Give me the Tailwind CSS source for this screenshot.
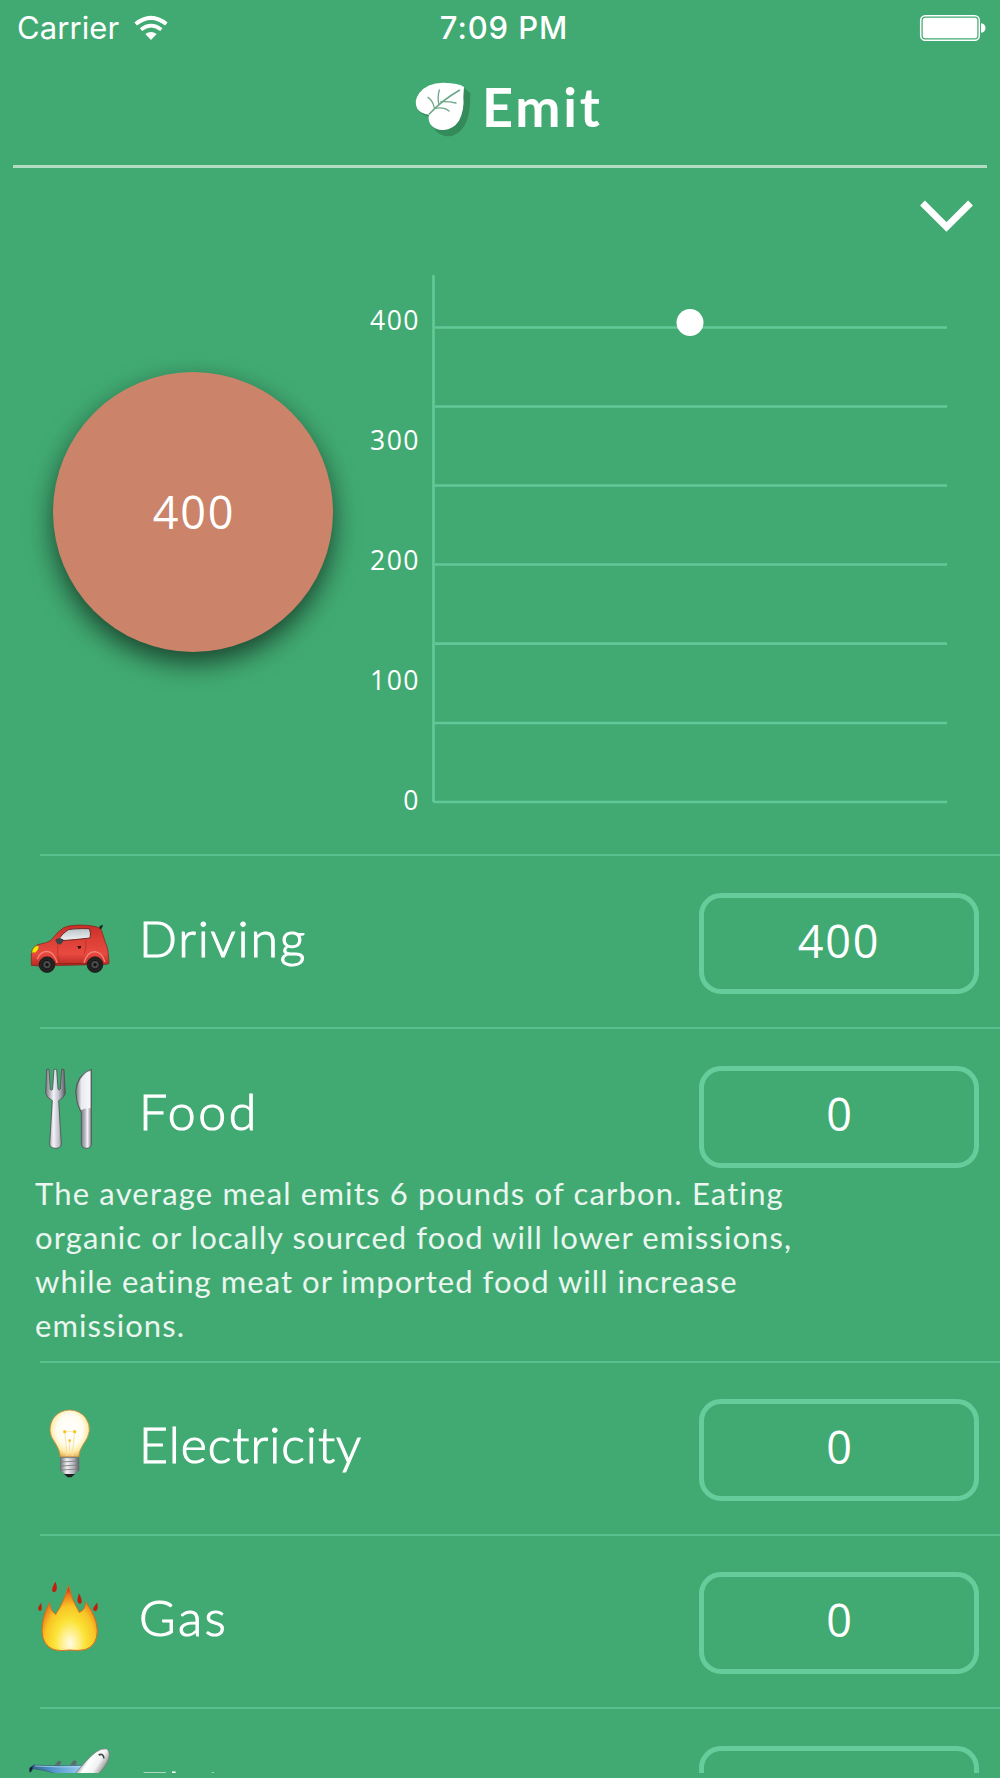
<!DOCTYPE html>
<html lang="en">
<head>
<meta charset="utf-8">
<title>Emit</title>
<script src="https://cdn.jsdelivr.net/npm/@tailwindcss/browser@4"></script>
</head>
<body class="bg-[#41aa72] text-white">
<div class="flex h-[1778px] w-[1000px] flex-col overflow-hidden pb-[5px]">

  <!-- Status bar -->
  <div class="grid h-[54px] shrink-0 grid-cols-3 items-center pt-[1px] pr-[13px] pl-[17px] font-['Inter',sans-serif] text-[31px] leading-[54px]">
    <div class="flex items-center gap-[15px]">
      <span class="tracking-[0.1px]">Carrier</span>
      <svg class="h-[26px] w-[34px]" viewBox="399 41 102 78" fill="none" stroke="#fff">
        <path d="M404 68Q450 31 496 68" stroke-width="12"/>
        <path d="M420 85Q450 61 481 85" stroke-width="11"/>
        <path d="M433 98Q450 86 467 98L450 116Z" fill="#fff" stroke="none"/>
      </svg>
    </div>
    <div class="pl-[4px] text-center font-medium tracking-[0.9px]">7:09 PM</div>
    <div class="flex justify-end">
      <svg class="h-[28px] w-[68px]" viewBox="0 0 68 28">
        <rect x="1.7" y="1.7" width="58.6" height="24.6" rx="4.5" fill="none" stroke="#fff" stroke-width="1.5"/>
        <rect x="3.7" y="3.7" width="54.6" height="20.6" rx="2.5" fill="#fff"/>
        <path d="M62 9.3Q66.5 10 66.5 14T62 18.7Z" fill="#fff"/>
      </svg>
    </div>
  </div>

  <!-- Title -->
  <header class="mx-[13px] flex h-[114px] shrink-0 items-start border-b-[3px] border-[#b3ddc3] pt-[20px] pl-[394px]">
    <svg class="mt-[2px] h-[70px] w-[70px] shrink-0" viewBox="21 228 210 210">
      <path d="M192 264L211 280Q212 345 195 374Q172 414 135 408Q112 402 101 383L85 348Q62 345 54 329Z" fill="#338a5b"/>
      <path d="M192 261Q178 249 130 248Q80 249 58 279Q40 303 52 326Q62 341 87 344Q83 362 93 375Q107 391 131 390Q160 388 177 362Q194 330 190 290Z" fill="#fff"/>
      <g fill="none" stroke="#6fa889" stroke-linecap="round">
        <path d="M88 342Q125 302 178 271" stroke-width="5"/>
        <path d="M103 324Q99 302 84 292M116 311Q112 292 118 270M105 325Q132 320 147 333M123 305Q145 304 168 309" stroke-width="4"/>
      </g>
    </svg>
    <h1 class="pl-[5px] font-['Lato',sans-serif] text-[54px] leading-[66px] font-bold tracking-[2.8px]">Emit</h1>
  </header>

  <!-- Summary: total and chart -->
  <section class="flex h-[686px] shrink-0 flex-col">
    <div class="flex h-[82px] justify-end pt-[28px] pr-[24px]">
      <svg class="h-[40px] w-[60px]" viewBox="916 196 60 40" fill="none" stroke="#fff" stroke-width="6.8">
        <path d="M922.5 203L946.5 227L970.5 203"/>
      </svg>
    </div>
    <div class="flex">
      <div class="ml-[53px] flex pt-[122px]">
        <div class="flex size-[280px] items-center justify-center rounded-full bg-[#cb8469] pl-[2px] font-['Open_Sans',sans-serif] text-[45px] tracking-[1.8px] shadow-[0_11px_27px_rgba(0,0,0,0.6)]">400</div>
      </div>
      <div class="mt-[50px] flex h-[520px] w-[87px] flex-col justify-between text-right font-['Open_Sans',sans-serif] text-[26.5px] leading-[40px] tracking-[1.5px]">
        <span>400</span><span>300</span><span>200</span><span>100</span><span>0</span>
      </div>
      <svg class="mt-[20px] ml-[10px] h-[540px] w-[520px]" viewBox="430 270 520 540" fill="none" stroke="#63c897" stroke-width="2.7">
        <path d="M433.5 275V802"/>
        <path d="M435 327.5H947M435 406.5H947M435 485.5H947M435 564.5H947M435 643.7H947M435 723H947M433.5 802H947"/>
        <circle cx="690" cy="322.5" r="13.5" fill="#fff" stroke="none"/>
      </svg>
    </div>
  </section>

  <!-- Categories -->
  <main class="min-h-0 grow overflow-hidden font-['Lato',sans-serif]">
    <section class="h-[173px]">
      <div class="ml-[40px] h-[2px] bg-[#5bc08f]"></div>
      <div class="-mt-[2px] flex">
        <svg class="h-[173px] w-[139px] shrink-0" viewBox="0 42 417 519">
          <defs>
            <linearGradient id="car" x1="0" y1="0" x2="0" y2="1"><stop offset="0" stop-color="#c62f27"/><stop offset=".3" stop-color="#d93d34"/><stop offset=".7" stop-color="#e84a40"/><stop offset="1" stop-color="#b92820"/></linearGradient>
            <linearGradient id="glass" x1="0" y1="0" x2="0" y2="1"><stop offset="0" stop-color="#b9c2c6"/><stop offset="1" stop-color="#f3f5f6"/></linearGradient>
          </defs>
          <path d="M297 268L299 258L309 254L306 264L302 270Z" fill="#222"/>
          <path d="M94 376V342Q96 322 113 314Q142 309 153 301Q172 275 191 263Q205 256 236 255Q280 255 298 264Q306 269 309 285L316 307Q325 322 327 370L320 373L115 378Z" fill="url(#car)" stroke="#7c2018" stroke-width="2"/>
          <path d="M112 358Q120 334 142 334Q163 336 172 370M252 369Q260 336 285 335Q306 337 315 366" fill="none" stroke="#f4857a" stroke-width="4"/>
          <path d="M160 371H262" stroke="#98221b" stroke-width="4"/>
          <path d="M172 303Q188 278 205 269Q225 265 268 266Q274 278 270 294Q230 299 172 303Z" fill="url(#glass)" stroke="#6e2622" stroke-width="3"/>
          <path d="M173 300V340Q175 358 180 368M257 300Q260 320 253 342" fill="none" stroke="#b32c25" stroke-width="2"/>
          <path d="M166 300Q170 293 181 295L190 298Q190 310 179 314Q169 312 166 300Z" fill="#3b4447"/>
          <path d="M232 318H243V324L236 327Z" fill="#3a100e"/>
          <path d="M95 338Q98 322 110 317L117 319Q116 331 106 338Z" fill="#f4e80a" stroke="#9c7d10" stroke-width="1.5"/>
          <g fill="#242424" stroke="#111" stroke-width="2"><circle cx="141" cy="374" r="23.5"/><circle cx="285" cy="374" r="23.5"/></g>
          <g fill="#4a4a4a" stroke="#101010" stroke-width="3"><circle cx="141" cy="374" r="13"/><circle cx="285" cy="374" r="13"/></g>
          <g fill="#141414"><circle cx="141" cy="374" r="5"/><circle cx="285" cy="374" r="5"/></g>
        </svg>
        <div class="w-[560px] pt-[54px] text-[50px] leading-[60px] font-light tracking-[1.8px] [-webkit-text-stroke:1.1px_white]">Driving</div>
        <div class="mt-[39px] flex h-[101px] w-[280px] items-center justify-center rounded-[22px] border-[5px] border-[#66cc9c] pb-[5px] font-['Open_Sans',sans-serif] text-[45px] tracking-[1.8px]">400</div>
      </div>
    </section>

    <section class="h-[334px]">
      <div class="ml-[40px] h-[2px] bg-[#5bc08f]"></div>
      <div class="-mt-[2px] flex h-[144px]">
        <svg class="h-[173px] w-[139px] shrink-0" viewBox="0 -39 417 519">
          <defs>
            <linearGradient id="steel"><stop offset="0" stop-color="#777780"/><stop offset=".4" stop-color="#f1f1f6"/><stop offset=".65" stop-color="#c5c5d0"/><stop offset="1" stop-color="#55555d"/></linearGradient>
            <linearGradient id="handle" gradientUnits="userSpaceOnUse" x1="243" x2="276" y1="0" y2="0"><stop offset="0" stop-color="#777780"/><stop offset=".35" stop-color="#b5b5c0"/><stop offset=".6" stop-color="#f4f4f8"/><stop offset="1" stop-color="#6c6c75"/></linearGradient>
            <linearGradient id="blade"><stop offset="0" stop-color="#85868c"/><stop offset=".35" stop-color="#e9ebee"/><stop offset="1" stop-color="#f8f8fa"/></linearGradient>
          </defs>
          <g stroke="#4c5054" stroke-width="2.5" stroke-linejoin="round">
            <path d="M140 88H147L151 148Q155 154 158 147L162 88H170L174 147Q177 154 181 147L185 88H192L196 160Q194 172 176 182L184 312Q183 325 166 325Q150 324 149 312L157 182Q139 172 137 160Z" fill="url(#steel)"/>
            <path d="M274 88V312Q273 325 259 325Q245 324 244 312V219Q228 190 227 155Q230 103 274 88Z" fill="url(#handle)"/>
          </g>
          <path d="M271 93V205Q254 203 243 211Q230 185 230 155Q234 108 271 93Z" fill="url(#blade)"/>
        </svg>
        <div class="w-[560px] pt-[54px] text-[50px] leading-[60px] font-light tracking-[2.6px] [-webkit-text-stroke:1.1px_white]">Food</div>
        <div class="mt-[39px] flex h-[102px] w-[280px] items-center justify-center rounded-[22px] border-[5px] border-[#66cc9c] pb-[6px] font-['Open_Sans',sans-serif] text-[45px]">0</div>
      </div>
      <p class="pl-[35px] text-[31px] leading-[44px] whitespace-nowrap text-[#eaf6ef]"><span class="tracking-[1.18px]">The average meal emits 6 pounds of carbon. Eating</span><br><span class="tracking-[1.1px]">organic or locally sourced food will lower emissions,</span><br><span class="tracking-[1.04px]">while eating meat or imported food will increase</span><br><span class="tracking-[1.1px]">emissions.</span></p>
    </section>

    <section class="h-[173px]">
      <div class="ml-[40px] h-[2px] bg-[#5bc08f]"></div>
      <div class="-mt-[2px] flex">
        <svg class="h-[173px] w-[139px] shrink-0" viewBox="0 33 417 519">
          <defs>
            <radialGradient id="bulb" cx=".5" cy=".42" r=".6"><stop offset="0" stop-color="#fff"/><stop offset=".55" stop-color="#fffdf0"/><stop offset=".8" stop-color="#ffeaa4"/><stop offset="1" stop-color="#e9ae50"/></radialGradient>
            <linearGradient id="cap"><stop offset="0" stop-color="#6f7478"/><stop offset=".35" stop-color="#f0f0f2"/><stop offset=".7" stop-color="#b5b5be"/><stop offset="1" stop-color="#5c6064"/></linearGradient>
          </defs>
          <path d="M209 180Q240 181 257 204Q270 222 268 243Q266 261 250 283Q238 300 236 321H181Q179 299 167 281Q151 260 150 242Q150 217 164 200Q181 181 209 180Z" fill="url(#bulb)" stroke="#c98b3c" stroke-width="2.5"/>
          <path d="M194 247L202 318M224 247L216 318M209 272V310" fill="none" stroke="#f6e2ae" stroke-width="3"/>
          <path d="M192 245H226" stroke="#fbe9a4" stroke-width="3"/>
          <g fill="#f6c521"><circle cx="194" cy="245" r="5"/><circle cx="224" cy="245" r="5"/><circle cx="209" cy="272" r="4"/></g>
          <path d="M181 322H237V361L221 374H196L181 361Z" fill="url(#cap)" stroke="#666b6e" stroke-width="1.5"/>
          <path d="M181 323H237M182 336L236 333M182 348L236 345M183 360L235 357" stroke="#777b80" stroke-width="2.5"/>
          <path d="M192 372H225L214 382H203Z" fill="#202123"/>
        </svg>
        <div class="w-[560px] pt-[53px] text-[50px] leading-[60px] font-light tracking-[1px] [-webkit-text-stroke:1.1px_white]">Electricity</div>
        <div class="mt-[38px] flex h-[102px] w-[280px] items-center justify-center rounded-[22px] border-[5px] border-[#66cc9c] pb-[6px] font-['Open_Sans',sans-serif] text-[45px]">0</div>
      </div>
    </section>

    <section class="h-[173px]">
      <div class="ml-[40px] h-[2px] bg-[#5bc08f]"></div>
      <div class="-mt-[2px] flex">
        <svg class="h-[173px] w-[139px] shrink-0" viewBox="0 -18 417 519">
          <defs>
            <radialGradient id="fire" gradientUnits="userSpaceOnUse" cx="210" cy="310" r="165" gradientTransform="translate(210 0) scale(.68 1) translate(-210 0)"><stop offset="0" stop-color="#fffbe8"/><stop offset=".22" stop-color="#fff08a"/><stop offset=".42" stop-color="#fbe336"/><stop offset=".68" stop-color="#f8c424"/><stop offset=".88" stop-color="#ea7a1c"/><stop offset="1" stop-color="#cf2a12"/></radialGradient>
          </defs>
          <path d="M206 137Q213 177 238 217Q256 211 257 186Q291 232 292 272Q291 318 255 329Q232 333 209 330Q184 334 162 329Q127 317 126 272Q126 231 149 188Q150 211 167 223Q190 190 206 137Z" fill="url(#fire)" stroke="#dd6b1b" stroke-width="3"/>
          <g fill="#d01808" stroke="#9c2b18" stroke-width="1">
            <path d="M166 126Q173 144 168 152Q163 159 157 153Q155 146 166 126Z"/>
            <path d="M237 161Q247 180 244 188Q239 194 234 187Q231 178 237 161Z"/>
            <path d="M123 190Q126 206 123 211Q118 214 115 208Q114 202 123 190Z"/>
            <path d="M291 189Q295 202 290 211Q284 216 280 209Q280 202 291 189Z"/>
          </g>
        </svg>
        <div class="w-[560px] pt-[53px] text-[50px] leading-[60px] font-light tracking-[2.4px] [-webkit-text-stroke:1.1px_white]">Gas</div>
        <div class="mt-[38px] flex h-[102px] w-[280px] items-center justify-center rounded-[22px] border-[5px] border-[#66cc9c] pb-[6px] font-['Open_Sans',sans-serif] text-[45px]">0</div>
      </div>
    </section>

    <section class="h-[173px]">
      <div class="ml-[40px] h-[2px] bg-[#5bc08f]"></div>
      <div class="-mt-[2px] flex">
        <svg class="h-[173px] w-[139px] shrink-0" viewBox="0 501 417 519">
          <defs>
            <linearGradient id="wing"><stop offset="0" stop-color="#315a80"/><stop offset=".4" stop-color="#4f93ca"/><stop offset="1" stop-color="#9bd0f3"/></linearGradient>
            <linearGradient id="hull" gradientUnits="userSpaceOnUse" x1="252" y1="650" x2="318" y2="692"><stop offset="0" stop-color="#8b8f92"/><stop offset=".25" stop-color="#fff"/><stop offset=".6" stop-color="#f2f2f2"/><stop offset="1" stop-color="#777"/></linearGradient>
          </defs>
          <path d="M162 677L175 662L184 664L180 677ZM209 677L221 661L231 664L226 677Z" fill="#5d6c6c"/>
          <path d="M89 696V684L101 675Q170 679 252 676L235 702H170Q140 690 100 686L92 696Z" fill="url(#wing)" stroke="#2c4d68" stroke-width="1.5"/>
          <path d="M105 678Q170 682 245 680" fill="none" stroke="#c4e4f8" stroke-width="2"/>
          <path d="M89 696V684L99 678L97 686L92 696Z" fill="#14222f"/>
          <path d="M215 714Q262 655 288 636Q305 624 320 627Q330 632 327 653Q322 677 283 714Z" fill="url(#hull)" stroke="#6f7375" stroke-width="2"/>
          <path d="M296 645Q309 638 312 655" fill="none" stroke="#3f4346" stroke-width="5"/>
        </svg>
        <div class="w-[560px] pt-[52px] text-[50px] leading-[60px] font-light tracking-[1.5px] [-webkit-text-stroke:1.1px_white]">Flying</div>
        <div class="mt-[39px] flex h-[102px] w-[280px] items-center justify-center rounded-[22px] border-[5px] border-[#66cc9c] pb-[6px] font-['Open_Sans',sans-serif] text-[45px]">0</div>
      </div>
    </section>
  </main>
</div>
</body>
</html>
